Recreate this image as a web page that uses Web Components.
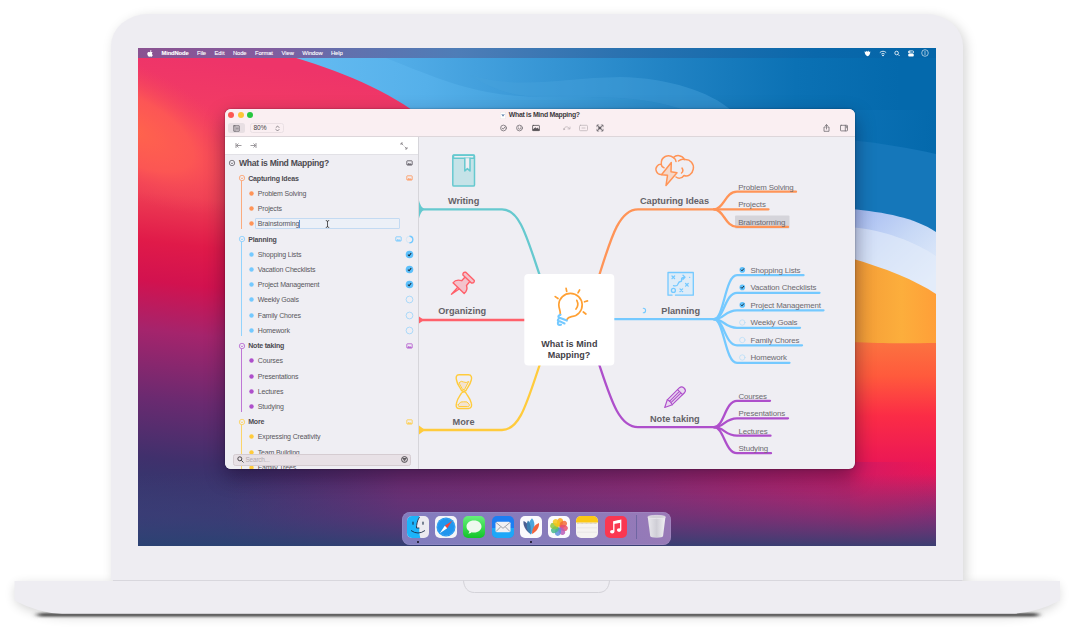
<!DOCTYPE html>
<html lang="en">
<head>
<meta charset="utf-8">
<title>MindNode on a laptop</title>
<style>
html,body{margin:0;padding:0;background:#fff}
body{width:1080px;height:634px;overflow:hidden;font-family:"Liberation Sans",Arial,sans-serif}
</style>
</head>
<body>
<lap-top>
  <desk-top>
    <menu-bar slot="menu"></menu-bar>
    <app-window>
      <title-bar slot="title"></title-bar>
      <out-line slot="side"></out-line>
      <mind-map></mind-map>
    </app-window>
    <app-dock slot="dock"></app-dock>
  </desk-top>
</lap-top>
<script>
const define = (name, html, init) => customElements.define(name, class extends HTMLElement {
  connectedCallback() {
    if (this.shadowRoot) return;
    const root = this.attachShadow({mode: 'open'});
    root.innerHTML = typeof html === 'function' ? html(this) : html;
    if (init) init(this, root);
  }
});

/* A single line of text, tracked so that it fills the width given in "w". */
define('fit-text', `<style>:host{display:inline-block;white-space:nowrap;line-height:1}span{display:inline-block}</style><span><slot></slot></span>`, (el, root) => {
  const w = +el.getAttribute('w'), n = el.textContent.length, s = root.querySelector('span');
  if (!w) return;
  s.style.letterSpacing = ((w - s.getBoundingClientRect().width) / n) + 'px';
});

define('lap-top', `<style>
:host{display:flex;flex-direction:column;align-items:center;width:1074px;height:634px;position:relative}
.lid{margin-top:14px;width:852px;height:566px;box-sizing:border-box;padding:34px 27px;background:#eeedf2;border-radius:37px 37px 0 0/32px 32px 0 0;box-shadow:3px 3px 12px rgba(0,0,0,.17)}
svg{display:block;margin-top:-10px;width:1074px;height:64px;overflow:visible;position:relative}
</style>
<div class="lid"><slot></slot></div>
<svg viewBox="0 570 1074 64">
<defs><filter id="s" x="-10%" y="-60%" width="120%" height="260%"><feGaussianBlur stdDeviation="6"/></filter><filter id="t" x="-5%" y="-300%" width="110%" height="700%"><feGaussianBlur stdDeviation="3 .8"/></filter>
<clipPath id="c"><path d="M0 570H111V580H963V570H1080V640H0Z"/></clipPath></defs>
<g clip-path="url(#c)"><path d="M16 585H1058V602Q1040 614 1010 616H64Q34 614 16 602Z" fill="#000" opacity=".19" filter="url(#s)"/></g>
<rect x="38" y="613" width="1000" height="3.600" fill="#505050" filter="url(#t)"/>
<path d="M14.500 581H1060V600.500Q1036 613 1012 613.800H62Q38 613 14.500 600.500Z" fill="#eeedf2"/>
<path d="M113 580.500H962" stroke="#d8d7dd"/>
<path d="M463.500 580.500c.5 7 4 12 11 12h124c7 0 10.500-5 11-12" fill="none" stroke="#d3d2d8"/>
</svg>`);

define('desk-top', `<style>
:host{display:flex;flex-direction:column;align-items:center;width:798px;height:498px;position:relative;overflow:hidden;z-index:0}
.wall{position:absolute;inset:0;width:798px;height:498px;z-index:-1}
main{margin-top:51px;padding-left:6px}
footer{margin:43px 0 0 0;padding-right:1px}
</style>
<svg class="wall" viewBox="138 48 798 498" preserveAspectRatio="none">
<defs>
<linearGradient id="blue" x1="300" y1="60" x2="936" y2="110" gradientUnits="userSpaceOnUse"><stop offset="0" stop-color="#64bbf1"/><stop offset=".2" stop-color="#55b0ea"/><stop offset=".5" stop-color="#3393d0"/><stop offset=".8" stop-color="#0f75b9"/><stop offset="1" stop-color="#0469ac"/></linearGradient>
<linearGradient id="sw" x1="380" y1="0" x2="900" y2="0" gradientUnits="userSpaceOnUse"><stop offset="0" stop-color="#56b0ea"/><stop offset=".25" stop-color="#3d9bd9"/><stop offset=".55" stop-color="#2183c4"/><stop offset=".8" stop-color="#0b71b4"/><stop offset="1" stop-color="#0469ac"/></linearGradient>
<linearGradient id="red" x1="200" y1="60" x2="150" y2="546" gradientUnits="userSpaceOnUse"><stop offset="0" stop-color="#ee3469"/><stop offset=".14" stop-color="#f33e62"/><stop offset=".28" stop-color="#ee3e54"/><stop offset=".38" stop-color="#e01a49"/><stop offset=".46" stop-color="#d2124f"/><stop offset=".56" stop-color="#a5246c"/><stop offset=".7" stop-color="#6a2a70"/><stop offset=".82" stop-color="#40306c"/><stop offset="1" stop-color="#1c4472"/></linearGradient>
<radialGradient id="or" cx="0" cy="0" r="1" gradientUnits="userSpaceOnUse" gradientTransform="translate(132 130) rotate(28) scale(135 62)"><stop offset="0" stop-color="#ff644c"/><stop offset=".5" stop-color="#ff5c52" stop-opacity=".8"/><stop offset="1" stop-color="#f4455c" stop-opacity="0"/></radialGradient>
<linearGradient id="bot" x1="138" y1="0" x2="936" y2="0" gradientUnits="userSpaceOnUse"><stop offset="0" stop-color="#35316c"/><stop offset=".3" stop-color="#632c70"/><stop offset=".6" stop-color="#8e2a74"/><stop offset=".8" stop-color="#b0236e"/><stop offset="1" stop-color="#cf1b62"/></linearGradient>
<linearGradient id="fade" x1="0" y1="474" x2="0" y2="548" gradientUnits="userSpaceOnUse"><stop offset="0" stop-color="#5a3c7c" stop-opacity="0"/><stop offset=".55" stop-color="#4a3c7a" stop-opacity=".5"/><stop offset="1" stop-color="#2a4272" stop-opacity=".92"/></linearGradient>
<linearGradient id="rr" x1="0" y1="340" x2="0" y2="520" gradientUnits="userSpaceOnUse"><stop offset="0" stop-color="#fb7440"/><stop offset=".2" stop-color="#ff5a3c"/><stop offset=".42" stop-color="#fb2c46"/><stop offset=".7" stop-color="#ea1656"/><stop offset="1" stop-color="#b82070"/></linearGradient>
<linearGradient id="wh" x1="855" y1="215" x2="925" y2="290" gradientUnits="userSpaceOnUse"><stop offset="0" stop-color="#a8bdf2"/><stop offset=".5" stop-color="#c8d9f6"/><stop offset="1" stop-color="#e2ecfa"/></linearGradient>
<linearGradient id="ye" x1="850" y1="300" x2="936" y2="300" gradientUnits="userSpaceOnUse"><stop offset="0" stop-color="#f39a36"/><stop offset=".6" stop-color="#fcae3c"/><stop offset="1" stop-color="#ff9f38"/></linearGradient>
</defs>
<rect x="138" y="48" width="798" height="498" fill="url(#blue)"/>
<path d="M386 58C448 83 480 96 540 97C600 97 640 95 685 110H936V48H370Z" fill="url(#sw)"/>
<path d="M470 75C520 90 560 78 620 77C670 78 710 92 731 110H685C640 95 600 97 540 97C510 96 490 88 470 75Z" fill="#48a1dc" opacity=".45"/>
<path d="M850 140C880 143 910 148 936 154V240H850Z" fill="#1577ba"/>
<path d="M138 48H262C320 64 372 82 412 110V465H850V546H138Z" fill="url(#red)"/>
<rect x="138" y="58" width="150" height="160" fill="url(#or)"/>
<path d="M850 209C885 212 915 218 936 232V295H850Z" fill="url(#wh)"/>
<path d="M850 227C885 230 915 242 936 256V295L850 262Z" fill="#e4ecfa" opacity=".6"/>
<path d="M850 258C885 268 915 280 936 294V420H850Z" fill="url(#ye)"/>
<path d="M850 342C890 344 915 343 936 343V546H850Z" fill="url(#rr)"/>
<linearGradient id="mk2" x1="225" y1="0" x2="936" y2="0" gradientUnits="userSpaceOnUse"><stop offset="0" stop-color="#592c70" stop-opacity="0"/><stop offset=".25" stop-color="#6f2c72"/><stop offset=".6" stop-color="#942a74"/><stop offset=".84" stop-color="#c01f6a"/><stop offset=".9" stop-color="#d41a62" stop-opacity=".9"/><stop offset="1" stop-color="#e0185c" stop-opacity="0"/></linearGradient>
<rect x="138" y="462" width="798" height="84" fill="url(#mk2)"/>
<rect x="138" y="460" width="798" height="86" fill="url(#fade)"/>
</svg>
<slot name="menu"></slot>
<main><slot></slot></main>
<footer><slot name="dock"></slot></footer>`);

define('menu-bar', `<style>
:host{display:flex;align-items:center;width:798px;height:10px;background:linear-gradient(90deg,#8a5291 0,#835c9e 16%,#6270ad 26%,#4e7db7 40%,#2b72b0 60%,#0a68ab 85%,#0365a8 100%);color:#fff;font-size:5.800px;box-sizing:border-box;padding:.5px 7px 0 8.500px}
nav{display:flex;align-items:center;flex:1}
nav fit-text{margin-right:8.500px;-webkit-text-stroke:.1px #fff;position:relative;top:.5px}
nav fit-text.b{font-weight:bold}
svg{display:block;fill:none;stroke:#fff;stroke-width:.8}
nav svg{margin-right:9px}
.r{display:flex;gap:7.400px;align-items:center}
</style>
<nav><svg width="6" height="7" viewBox="0 0 6 7" style="fill:#fff;stroke:none"><path d="M3 1.800C3 .8 3.500.2 4.300 0C4.400.9 3.900 1.600 3 1.800ZM5.600 2.500C4.700 3 4.800 4.400 5.800 4.900C5.400 6 4.700 6.900 4 6.700C3.300 6.400 3.100 6.400 2.500 6.700C1.600 7 .2 5.300.3 3.800C.4 2 1.700 1.600 2.900 2.200C3.900 1.600 5 1.700 5.600 2.500Z"/></svg>
<fit-text class="b" w="27">MindNode</fit-text><fit-text w="9">File</fit-text><fit-text w="10">Edit</fit-text><fit-text w="13.400">Node</fit-text><fit-text w="18">Format</fit-text><fit-text w="12.400">View</fit-text><fit-text w="20.200">Window</fit-text><fit-text w="11.500">Help</fit-text></nav>
<div class="r">
<svg width="7" height="7" viewBox="0 0 7 7" style="fill:#fff;stroke:none"><path d="M.6 1.300L2 1.900 2.500.7 3.500 1.800 4.600.6 4.900 1.900 6.300 1.400C6.300 4 5.200 5.800 3.500 6.200C1.800 5.800.6 4 .6 1.300Z"/></svg>
<svg width="8" height="7" viewBox="0 0 8 7"><path d="M.8 2.600C2.700.8 5.300.8 7.200 2.600M2.300 4.100C3.400 3.200 4.600 3.200 5.700 4.100"/><circle cx="4" cy="5.400" r=".5" fill="#fff"/></svg>
<svg width="6" height="7" viewBox="0 0 6 7"><circle cx="2.600" cy="3" r="1.800"/><path d="M4 4.400L5.600 6"/></svg>
<svg width="6" height="7" viewBox="0 0 6 7"><rect x=".4" y=".9" width="5.200" height="2.200" rx="1"/><rect x=".2" y="3.700" width="5.600" height="2.800" rx="1" fill="#fff" stroke="none"/><circle cx="1.600" cy="2" r=".6"/></svg>
<svg width="8" height="8" viewBox="0 0 8 8" style="stroke-width:.6"><circle cx="4" cy="4" r="3.300"/><path d="M4 2v4"/></svg>
</div>`);

define('app-window', `<style>
:host{display:grid;grid-template:28px 332px/194px 436px;width:630px;height:360px;border-radius:6px;overflow:hidden;background:#efeef3;position:relative;box-shadow:0 8px 20px rgba(10,0,30,.42),0 0 2px rgba(0,0,0,.4)}
</style><slot name="title"></slot><slot name="side"></slot><slot></slot>`);

define('title-bar', `<style>
:host{grid-column:1/3;display:grid;grid-template-rows:12.500px 15px;background:#faeff2;border-bottom:.5px solid #ddd6da;color:#4a474b}
.top,.tools{display:grid;grid-template-columns:1fr auto 1fr;align-items:center}
.lights{display:flex;gap:3.600px;padding-left:3.300px}
i{width:6px;height:6px;border-radius:50%}
.name{display:flex;align-items:center;gap:3px;font-weight:bold;font-size:6.900px;color:#3d3a3e;padding:1.200px .5px 0 0}
.tools{height:13px}
.left{display:flex;align-items:center;gap:4.500px;padding-left:3px}
.btn{width:17px;height:10.500px;border-radius:2.500px;background:#e8dfe3;display:flex;align-items:center;justify-content:center}
.zoom{width:34px;height:10.500px;box-sizing:border-box;border:.7px solid #ebe0e4;border-radius:2.500px;display:flex;align-items:center;justify-content:space-between;padding:0 3px;font-size:6.600px;color:#444}
.mid{display:flex;align-items:center;padding-left:23.500px}
.right{display:flex;justify-content:flex-end;align-items:center;gap:10.500px;padding-right:7px}
svg{display:block;fill:none;stroke:#6a666b;stroke-width:.75;stroke-linecap:round;stroke-linejoin:round}
</style>
<div class="top"><div class="lights"><i style="background:#fc5753"></i><i style="background:#fdc636"></i><i style="background:#27c73f"></i></div>
<div class="name"><svg width="6" height="7" viewBox="0 0 6 7" style="stroke:#ddd;stroke-width:.4"><rect x=".5" y=".2" width="5" height="6.600" fill="#fff"/><path d="M2.100 2.400L3 4.200L4 2.400" stroke="#557ba8" stroke-width=".9"/></svg><fit-text w="71">What is Mind Mapping?</fit-text></div><span></span></div>
<div class="tools">
<div class="left"><div class="btn"><svg width="7" height="7" viewBox="0 0 7 7"><rect x=".7" y=".7" width="5.600" height="5.600" rx=".3"/><path d="M2 .7V6.300M3.100 2.200h2.200M3.100 3.500h2.200M3.100 4.800h2.200" stroke-width=".6"/></svg></div>
<div class="zoom"><fit-text w="13">80%</fit-text><svg width="5" height="7" viewBox="0 0 5 7"><path d="M1 2.500L2.500 1L4 2.500M1 4.500L2.500 6L4 4.500"/></svg></div></div>
<div class="mid">
<svg width="7" height="8" viewBox="0 0 7 8"><circle cx="3.500" cy="4" r="2.900"/><path d="M2.200 4.100L3.200 5.200L5 2.800"/></svg>
<svg style="margin-left:9px" width="7" height="8" viewBox="0 0 7 8"><circle cx="3.500" cy="4" r="2.900"/><path d="M2.200 4.700Q3.500 5.900 4.800 4.700M2.500 3h.1M4.500 3h.1"/></svg>
<svg style="margin-left:9px;stroke:#4a474b" width="8" height="8" viewBox="0 0 8 8"><rect x=".6" y="1.400" width="6.800" height="5.200" rx=".6"/><path d="M1 6L3 3.700L4.400 4.800L5.400 4L7.200 6Z" fill="#5c585d"/></svg>
<svg style="margin-left:23px;stroke:#bcb3b7" width="8" height="8" viewBox="0 0 8 8"><path d="M1 5C1.500 2 5.500 2 6.500 4.800M5 4.900H7V3"/><circle cx="1" cy="5.200" r=".6"/></svg>
<svg style="margin-left:8.500px;stroke:#bcb3b7" width="9" height="8" viewBox="0 0 9 8"><rect x=".5" y="1.300" width="8" height="5.400" rx="1"/><path d="M3 4h3"/></svg>
<svg style="margin-left:8px" width="8" height="8" viewBox="0 0 8 8"><path d="M1.200 1.200L3 3M6.800 1.200L5 3M1.200 6.800L3 5M6.800 6.800L5 5M1 2.800V1H2.800M5.200 1H7V2.800M1 5.200V7H2.800M5.200 7H7V5.200"/><rect x="3" y="3" width="2" height="2" fill="#5c585d"/></svg>
</div>
<div class="right">
<svg width="7" height="8" viewBox="0 0 7 8"><path d="M2.300 3H1V7.300H6V3H4.700M3.500 5V.8M2.300 1.800L3.500.6L4.700 1.800"/></svg>
<svg width="8" height="8" viewBox="0 0 8 8"><rect x=".5" y="1.300" width="7" height="5.600" rx=".6"/><path d="M5.300 1.300V6.900M6.300 2.600h.3M6.300 3.700h.3"/></svg>
</div></div>`);

const O = '#ff9457', B = '#74c9ff', P = '#ae4fcb', Y = '#ffcb3c';
const pic = c => `<svg width="7" height="6" viewBox="0 0 7 6" fill="none" stroke="${c}" stroke-width=".8"><rect x=".8" y=".8" width="5.400" height="4.300" rx=".6"/><path d="M1 4.700L2.800 2.900L4 3.900L4.700 3.300L6 4.700Z" fill="${c}" stroke="none"/></svg>`;
const check = on => `<svg width="9" height="9" viewBox="0 0 9 9" fill="none"><circle cx="4.500" cy="4.500" r="${on ? 3.8 : 3.4}" fill="${on ? '#5dc0fb' : 'none'}" stroke="#8fd0fb" stroke-width="${on ? 0 : .7}"/>${on ? '<path d="M2.900 4.600L4.100 5.800L6.200 3.200" stroke="#1d3446" stroke-width="1.100"/>' : ''}</svg>`;
const ring = `<svg width="9" height="9" viewBox="0 0 9 9" fill="none" stroke="#74c9ff"><circle cx="4.500" cy="4.500" r="3.300" stroke-width=".5" opacity=".35"/><path d="M4.500 1.200A3.300 3.300 0 0 1 4.500 7.800" stroke-width="1.400"/></svg>`;

define('outline-row', el => {
  const k = el.getAttribute('kind'), c = el.getAttribute('color'), st = el.getAttribute('state'), w = el.getAttribute('w');
  const pad = k === 'root' ? 3 : k === 'head' ? 12.7 : 23.6;
  const mark = k === 'leaf' ? `<svg width="5" height="5" viewBox="0 0 5 5"><circle cx="2.500" cy="2.500" r="2.200" fill="${c}"/></svg>`
    : `<svg width="8" height="8" viewBox="0 0 8 8" fill="none" stroke="${c}" stroke-width=".7"><circle cx="4" cy="4" r="2.700" fill="#efeef3"/><path d="M2.700 3.600L4 4.800L5.300 3.600"/></svg>`;
  const right = k === 'leaf' ? (st === 'on' ? check(1) : st === 'off' ? check(0) : '') : st === 'prog' ? pic(c) + ring : pic(c);
  return `<style>
:host{display:flex;flex:none;align-items:center;height:15.220px;box-sizing:border-box;padding:0 ${k !== 'leaf' && st !== 'prog' ? 5.2 : 4.5}px 0 ${pad}px;font-size:${k === 'root' ? 8.6 : 7}px;font-weight:${k === 'leaf' ? 'normal' : 'bold'};color:${k === 'leaf' ? '#58565c' : '#4c4a50'};position:relative}
.m{display:block;width:${k === 'leaf' ? 5 : 8}px;margin-right:${k === 'leaf' ? 1.2 : k === 'head' ? 2.5 : 3}px}
svg{display:block}
.f{flex:1;display:flex;align-items:center;height:9px;padding:0 0 0 ${k === 'leaf' ? 3 : 0}px;margin-right:${st === 'edit' ? 14 : 0}px}
.e{background:#ecf0f7;border:1px solid #c3daf2;border-radius:1px;padding-left:2px}
.caret{width:1px;height:8px;background:#4f94d8}
.i{margin-left:25px}
.r{display:flex;align-items:center;gap:3px}
</style><span class="m">${mark}</span><div class="f ${st === 'edit' ? 'e' : ''}"><fit-text w="${w}">${el.getAttribute('text')}</fit-text>${st === 'edit' ? '<span class="caret"></span><svg class="i" width="5" height="8" viewBox="0 0 5 8" fill="none" stroke="#333" stroke-width=".8"><path d="M.8.6Q2.500.6 2.500 1.500Q2.500.6 4.200.6M2.500 1V7M.8 7.400Q2.500 7.400 2.500 6.500Q2.500 7.400 4.200 7.400"/></svg>' : ''}</div><div class="r">${right}</div>`;
});

define('outline-group', el => `<style>
:host{display:block;flex:none;position:relative}
.rail{position:absolute;left:16.200px;top:10.500px;bottom:2px;width:1px;background:${el.getAttribute('color')};opacity:.75}
</style><div class="rail"></div><slot></slot>`);

const groups = [
  [O, 'Capturing Ideas', 50.5, '', [['Problem Solving', 48.5], ['Projects', 24], ['Brainstorming', 41.5, 'edit']]],
  [B, 'Planning', 28.5, 'prog', [['Shopping Lists', 43.5, 'on'], ['Vacation Checklists', 57.5, 'on'], ['Project Management', 61.5, 'on'], ['Weekly Goals', 41, 'off'], ['Family Chores', 43, 'off'], ['Homework', 32, 'off']]],
  [P, 'Note taking', 36, '', [['Courses', 25], ['Presentations', 40.5], ['Lectures', 25.5], ['Studying', 26]]],
  [Y, 'More', 16, '', [['Expressing Creativity', 62.5], ['Team Building', 41.8], ['Family Trees', 38.3]]]
];
define('out-line', `<style>
:host{display:flex;flex-direction:column;height:332px;overflow:hidden;box-sizing:border-box;border-right:1px solid #d6d5da;background:#efeef3;position:relative}
header{height:18.400px;box-sizing:border-box;flex:none;background:#fff;border-bottom:.6px solid #e2e1e6;display:flex;align-items:center;padding:0 10px 0 10px;gap:8px}
header svg{fill:none;stroke:#858287;stroke-width:.8}
.search{position:absolute;left:7.500px;top:316.500px;width:178.500px;height:12.500px;box-sizing:border-box;border-radius:2.500px;background:rgba(232,224,228,.94);border:.5px solid #d5ccd1;display:flex;align-items:center;padding:0 2.500px 0 3.500px;font-size:6.500px;color:#b3abb1}
.search fit-text{flex:1;margin-left:1.500px}
.search svg{fill:none;stroke:#3d3a3e;stroke-width:.9}
</style>
<header>
<svg width="7" height="7" viewBox="0 0 7 7"><path d="M1 1V6M6.500 3.500H1.500M3.500 1.500L1.500 3.500L3.500 5.500"/></svg>
<svg width="7" height="7" viewBox="0 0 7 7"><path d="M6 1V6M.5 3.500H5.500M3.500 1.500L5.500 3.500L3.500 5.500"/></svg><span style="flex:1"></span>
<svg width="8" height="8" viewBox="0 0 8 8"><path d="M1 3V1H3M1 1L3.300 3.300M7 5V7H5M7 7L4.700 4.700"/></svg>
</header>
<outline-row kind="root" color="#55525a" text="What is Mind Mapping?" w="90"></outline-row>
${groups.map(([c, t, w, s, kids]) => `<outline-group color="${c}"><outline-row kind="head" color="${c}" text="${t}" w="${w}" state="${s}"></outline-row>${kids.map(k => `<outline-row kind="leaf" color="${c}" text="${k[0]}" w="${k[1]}" state="${k[2] || ''}"></outline-row>`).join('')}</outline-group>`).join('')}
<div class="search"><svg width="7" height="7" viewBox="0 0 7 7"><circle cx="2.800" cy="2.800" r="2"/><path d="M4.300 4.300L6.500 6.500"/></svg><fit-text w="24">Search...</fit-text><svg width="7" height="7" viewBox="0 0 7 7"><circle cx="3.500" cy="3.500" r="2.900"/><path d="M1.700 2.600H5.300M2.200 3.700H4.800M2.900 4.800H4.100"/></svg></div>`);

/* Label on the free canvas: x, y are the left edge and the middle of the text. */
define('map-label', el => `<style>
:host{position:absolute;left:${el.getAttribute('x') - 419}px;top:${el.getAttribute('y') - 137}px;transform:translateY(-50%);font-size:${el.getAttribute('size') || 7.9}px;font-weight:${el.hasAttribute('bold') ? 'bold' : 'normal'};color:${el.getAttribute('color') || '#6c6a70'};line-height:1;display:flex}
</style><fit-text w="${el.getAttribute('w')}">${el.getAttribute('text')}</fit-text>`);

const leaf = (t, x, y, w) => `<map-label text="${t}" x="${x}" y="${y + .5}" w="${w}"></map-label>`;
const head = (t, x, y, w) => `<map-label bold size="9.200" color="#646268" text="${t}" x="${x}" y="${y + .9}" w="${w}"></map-label>`;
const branch = (y0, y, x) => `<path d="M714 ${y0}C724 ${y0} 725 ${y} 737 ${y}H${x}"/>`;
const dot = (y, on) => on ? `<circle cx="742.300" cy="${y}" r="2.800" fill="#5dc0fb"/><path d="M741 ${y}l1 1l1.700-2.100" stroke="#1d3446" stroke-width="1" fill="none"/>` : `<circle cx="742.300" cy="${y}" r="2.700" fill="none" stroke="#a9dafa" stroke-width=".6"/>`;
define('mind-map', `<style>
:host{display:block;position:relative;width:436px;height:332px;overflow:hidden}
svg{position:absolute;inset:0;width:436px;height:332px}
</style>
<svg viewBox="419 137 436 332" fill="none" stroke-linecap="round" stroke-linejoin="round">
<rect x="735" y="215.500" width="54.500" height="13" rx="1" fill="#d5d4da"/>
<g stroke="#66c9cf" stroke-width="2.300"><path d="M419 209.300H502C520 209.300 527 238 540 276"/><path d="M419 200.500C420.500 206 422.500 208.500 425.500 209.300C422.500 210 420.500 213 419 218.500Z" fill="#66c9cf" stroke="none"/></g>
<g stroke="#ff606a" stroke-width="2.300"><path d="M419 320H525"/><path d="M419 316.500L424 320L419 323.500Z" fill="#ff606a" stroke="none"/></g>
<g stroke="${Y}" stroke-width="2.300"><path d="M419 430H502C520 430 527 402 540 364"/><path d="M419 425.500L425 430L419 434.500Z" fill="${Y}" stroke="none"/></g>
<g stroke="${O}" stroke-width="2.300"><path d="M599 276C611 238 619 209.300 638 209.300H768.500"/>${branch(209.3, 191.7, 796)}${branch(209.3, 226.9, 788)}</g>
<g stroke="${B}" stroke-width="2.300"><path d="M613 319.200H715"/>${branch(319.2, 275.2, 803.5)}${branch(319.2, 292.8, 819.5)}${branch(319.2, 310.3, 823.5)}${branch(319.2, 327.8, 800)}${branch(319.2, 345.3, 802)}${branch(319.2, 362.8, 789.5)}</g>
<g stroke="${P}" stroke-width="2.300"><path d="M599 364C611 400 619 427.200 638 427.200H715"/>${branch(427.2, 400.8, 770)}${branch(427.2, 418.3, 788)}${branch(427.2, 435.7, 770.5)}${branch(427.2, 453.2, 771)}</g>
<rect x="524.300" y="274" width="90" height="91.500" rx="4" fill="#fff"/>
<!-- book -->
<g stroke="#66c9cf" stroke-width="1.500"><rect x="452.800" y="154.900" width="21.700" height="31.200" rx="1.200" fill="#c5e3e8"/><path d="M453.500 155.200H474V158.300H453.500Z" fill="#efeef3"/><path d="M464.800 158.300V171L467.400 168.600L470 171V158.300" fill="#efeef3"/></g>
<!-- pin -->
<g stroke="#ff606a" stroke-width="1.400"><path d="M458.500 286.500L451.500 294.300L460.200 288.200"/><path d="M453 282.800C455.500 279.500 459.500 280 461.700 280.700L465.500 276.500L470.300 281L466.500 285.500C467.500 288.500 466.500 291.500 464.200 293.500Z" fill="#f3c3cc"/><path d="M462.900 275Q462.600 271.700 465.800 272.300L474.300 280.400Q474.600 283.400 471.400 283Z" fill="#f3c3cc"/></g>
<!-- hourglass -->
<g stroke="${Y}" stroke-width="1.400"><path d="M459 374.700H468.500C471.500 374.700 472 377.500 471.300 380C470 385.500 467.500 387 466 390.500L463.700 391.500L461.500 390.500C460 387 457.500 385.500 456.500 380C455.800 377.500 456 374.700 459 374.700Z"/><path d="M459 408.500H468.500C471.500 408.500 472 405.700 471.300 403.200C470 397.700 467.500 396 466 393L464.200 391.500L461.500 393C460 396 457.500 397.700 456.500 403.200C455.800 405.700 456 408.500 459 408.500Z"/><path d="M459.200 382.500Q461.300 380.300 463.700 382Q466.200 383.300 468.700 381.500L464.500 389.500H463Z" fill="#f3e3d0" stroke-width="1"/><path d="M458.300 404.500Q460.500 400.800 463.700 401.800Q467.500 400.700 469.300 404.500C469.500 406.500 469 406.500 467.500 406.500H460C458.500 406.500 458 406.500 458.300 404.500Z" fill="#f3e3d0" stroke-width="1"/></g>
<!-- storm cloud -->
<g stroke="${O}" stroke-width="1.500"><path d="M661.500 174.500C656.500 175 654.500 169 657.200 166Q658.800 164 661.300 164.300C660.500 156.500 668.500 153.500 673.500 157.600C676.500 154.500 682 155 684.500 159.500C690.500 159 694.200 164 693.300 169C692.400 174.300 687.700 177 684 175.500C681.500 179 678 178.500 676 177"/><path d="M661.300 164.300Q661.500 167 664 167.800M673.500 157.600Q676 159 676 161.500M678.500 161Q681.500 158.500 684.500 159.500M682 168Q684 171 681.500 173"/><path d="M671.300 162.500L661.500 174.700L667.500 175.300L666 185.500L677 172.700L671 171.700Z" fill="#f5d8ca"/></g>
<!-- strategy board -->
<g stroke="${B}" stroke-width="1.300"><path d="M672 295.200H668V272.500H693.300V295.200H675.500" fill="#deecf8"/><circle cx="673.400" cy="290.400" r="2"/><path d="M672 276l2.600 2.600m0-2.600l-2.600 2.600M685.600 283.500l2.600 2.600m0-2.600l-2.600 2.600M680 288.900l2.600 2.600m0-2.600l-2.600 2.600M673.500 285.700C680 287 676.500 282 680.500 281.500C683.500 281.300 679 277.500 684.500 277.300M683 275.300L685 277.300L683 279.300M689.600 277.300h.1"/></g>
<path d="M643.300 308.200A2.300 2.300 0 0 1 643.300 312.800" stroke="${B}" stroke-width="1.100"/>
<!-- pencil -->
<g stroke="${P}" stroke-width="1.100"><path d="M664.700 407.500L667.300 399.800L679.500 387.700Q681.700 385.900 684 388Q686.500 390.300 684.700 392.500L672.300 404.700Z" fill="#e8d9ef"/><path d="M667.300 399.800Q670.500 401 672.300 404.700M669.500 401.300L678.700 392.200M671 402.700L680.200 393.700M677.500 389.700L682.700 394.700"/></g>
<!-- light bulb -->
<g stroke="#ffa033" stroke-width="1.700"><path d="M560.300 314.500C560.500 310 558.800 309 558.800 304.500A11.700 11.700 0 1 1 571.500 316.700Q568 317.500 566.500 320"/><path d="M576.800 300.300Q579.200 305 576 309"/><path d="M555.200 296.600L558 298.500M566.100 288.300L566.700 291.300M579.600 290L578 292.800M587.500 300.900L584.500 301.800M583.300 312L585.900 314"/></g>
<path d="M560.500 314.800Q556.700 316.500 559.500 317.800L566.800 320.600M559.200 318.200Q556 321 560 321.400L564.500 323.500M558.300 321.500Q556.500 325.500 561 324.700" stroke="${B}" stroke-width="2.100"/>
${dot(269.9, 1)}${dot(287.4, 1)}${dot(304.9, 1)}${dot(322.5, 0)}${dot(340, 0)}${dot(357.5, 0)}
</svg>
${head('Writing', 448, 201, 31.3)}${head('Organizing', 438.2, 311.3, 48)}${head('More', 452.5, 422, 22)}
${head('Capturing Ideas', 640, 201.3, 69)}${head('Planning', 661.3, 310.8, 38.7)}${head('Note taking', 650, 419.3, 49.7)}
${leaf('Problem Solving', 738.2, 187, 55.4)}${leaf('Projects', 738.2, 204.4, 27.6)}${leaf('Brainstorming', 738.2, 222, 47)}
${leaf('Shopping Lists', 750.5, 270.2, 49.8)}${leaf('Vacation Checklists', 750.5, 287.7, 65.8)}${leaf('Project Management', 750.5, 305.2, 70.3)}${leaf('Weekly Goals', 750.5, 322.8, 46.8)}${leaf('Family Chores', 750.5, 340.3, 48.8)}${leaf('Homework', 750.5, 357.8, 36.3)}
${leaf('Courses', 738.5, 396, 28.2)}${leaf('Presentations', 738.5, 413.4, 46.5)}${leaf('Lectures', 738.5, 431, 29)}${leaf('Studying', 738.5, 448.4, 29.5)}
<map-label bold size="9" color="#434147" text="What is Mind" x="541.200" y="343.700" w="56.300"></map-label>
<map-label bold size="9" color="#434147" text="Mapping?" x="547.700" y="354.800" w="42.500"></map-label>`);

const petals = ['#f9a11b', '#f26b3a', '#e84e6c', '#b85cb8', '#5a8fdc', '#46b88c', '#8cc63f', '#f5c518'].map((c, i) => `<ellipse cx="11" cy="6.200" rx="3" ry="4.200" fill="${c}" opacity=".85" transform="rotate(${i * 45 + 12} 11 11)"/>`).join('');
const tile = (bg, art, run) => `<div class="app${run ? ' run' : ''}"><svg width="22" height="22" viewBox="0 0 22 22"><rect width="22" height="22" rx="5" fill="${bg}"/>${art}</svg></div>`;
define('app-dock', `<style>
:host{display:flex;align-items:center;width:269px;height:32.500px;box-sizing:border-box;border-radius:8px;background:linear-gradient(90deg,rgba(134,130,196,.93),rgba(140,128,192,.93) 60%,rgba(158,126,188,.93));box-shadow:0 0 0 .5px rgba(190,180,220,.35) inset;padding:0 5px 3px 4.800px}
.app{width:22px;height:22px;margin-right:6.250px;position:relative}
.run::after{content:"";position:absolute;left:10.200px;top:25px;width:1.800px;height:1.800px;border-radius:50%;background:#15121f}
.sep{width:1px;height:24px;background:#6f66a2;margin:0 10px 0 3px}
svg{display:block}
</style>
${tile('#eceaf0', '<path d="M5 0H12.500C10 5 9.500 9 9.500 12H12.300C12.200 16 12.600 19 13.300 22H5A5 5 0 0 1 0 17V5A5 5 0 0 1 5 0Z" fill="#1cb4fa"/><path d="M6 6V8.300M16 6V8.300" stroke="#1c2c48" stroke-width="1.100" stroke-linecap="round"/><path d="M4 14.500Q11 19.500 18 14.500M12.500 1C10 5 9.500 9 9.500 12H12.300" fill="none" stroke="#1c2c48" stroke-width=".9"/>', 1)}
${tile('#f4f5f8', '<circle cx="11" cy="11" r="9.500" fill="#2196ee"/><circle cx="11" cy="11" r="8.500" fill="none" stroke="#9fd2f7" stroke-width=".7" stroke-dasharray=".4 1"/><path d="M17.200 4.800L9.800 9.800L12.200 12.200Z" fill="#fa4436"/><path d="M4.800 17.200L9.800 9.800L12.200 12.200Z" fill="#fff"/>')}
${tile('url(#g1)', '<defs><linearGradient id="g1" x2="0" y2="1"><stop stop-color="#66f07a"/><stop offset="1" stop-color="#12c52a"/></linearGradient></defs><path d="M11 4.500C15.500 4.500 18.500 7.200 18.500 10.500S15.500 16.500 11 16.500C10 16.500 9.300 16.400 8.500 16.200C7.500 17.200 6.500 17.600 5.200 17.600C6 16.700 6.300 16 6.300 15.200C4.500 14.100 3.500 12.400 3.500 10.500C3.500 7.200 6.500 4.500 11 4.500Z" fill="#eef9ee"/>')}
${tile('#1d7ef2', '<path d="M0 12H22V17A5 5 0 0 1 17 22H5A5 5 0 0 1 0 17Z" fill="#1fb2f8" opacity=".8"/><rect x="3.500" y="5.800" width="15" height="10.500" rx="1.500" fill="#f0f0f3"/><path d="M4 6.500L11 12.300L18 6.500M4 15.600L8.700 10.800M18 15.600L13.300 10.800" fill="none" stroke="#9598a2" stroke-width=".9"/>')}
${tile('#fafafd', '<path d="M11 18.500C5 14 3 9.500 3.500 5C8 7 10.500 11 11 18.500Z" fill="#4a5f92"/><path d="M11 18.500C5.500 10 9.500 5 12 2.200C16 7 14.500 13 11 18.500Z" fill="#4ba5dc"/><path d="M12 18C12 12 15 8.500 19 7C19.500 11 17 15.500 12 18Z" fill="#f2633d"/><path d="M8.500 16C6 12 6.500 7 8 4.500C11 8 11 12 10.500 17.500Z" fill="#3c7fb0"/>', 1)}
${tile('#fafafd', petals)}
${tile('#f5f3f1', '<path d="M0 6.500V5A5 5 0 0 1 5 0H17A5 5 0 0 1 22 5V6.500Z" fill="#fbc814"/><path d="M1 7.300H21" stroke="#b8a67c" stroke-width=".6" stroke-dasharray=".8 .5"/><path d="M1 11.800H21M1 16.200H21" stroke="#e0dede" stroke-width=".6"/>')}
${tile('#fa3751', '<path d="M8.800 15.500V5.700L15.700 4.200V13.800" fill="none" stroke="#fff" stroke-width="1.300"/><path d="M8.800 5.400L15.700 4V6.700L8.800 8.100Z" fill="#fff"/><ellipse cx="7.200" cy="15.800" rx="2.200" ry="1.800" fill="#fff"/><ellipse cx="14.100" cy="14.100" rx="2.200" ry="1.800" fill="#fff"/>')}
<div class="sep"></div>
<svg width="20" height="25" viewBox="0 0 20 25"><defs><linearGradient id="tr"><stop stop-color="#e9e8ed"/><stop offset=".5" stop-color="#cfced6"/><stop offset="1" stop-color="#f2f1f5"/></linearGradient></defs><path d="M.8 2.500L3.300 22.500Q3.600 24.300 10 24.300T16.700 22.500L19.200 2.500Z" fill="url(#tr)"/><ellipse cx="10" cy="2.600" rx="9.200" ry="1.700" fill="#d2d1d8" stroke="#f2f1f5" stroke-width=".6"/></svg>`);
</script>
</body>
</html>
